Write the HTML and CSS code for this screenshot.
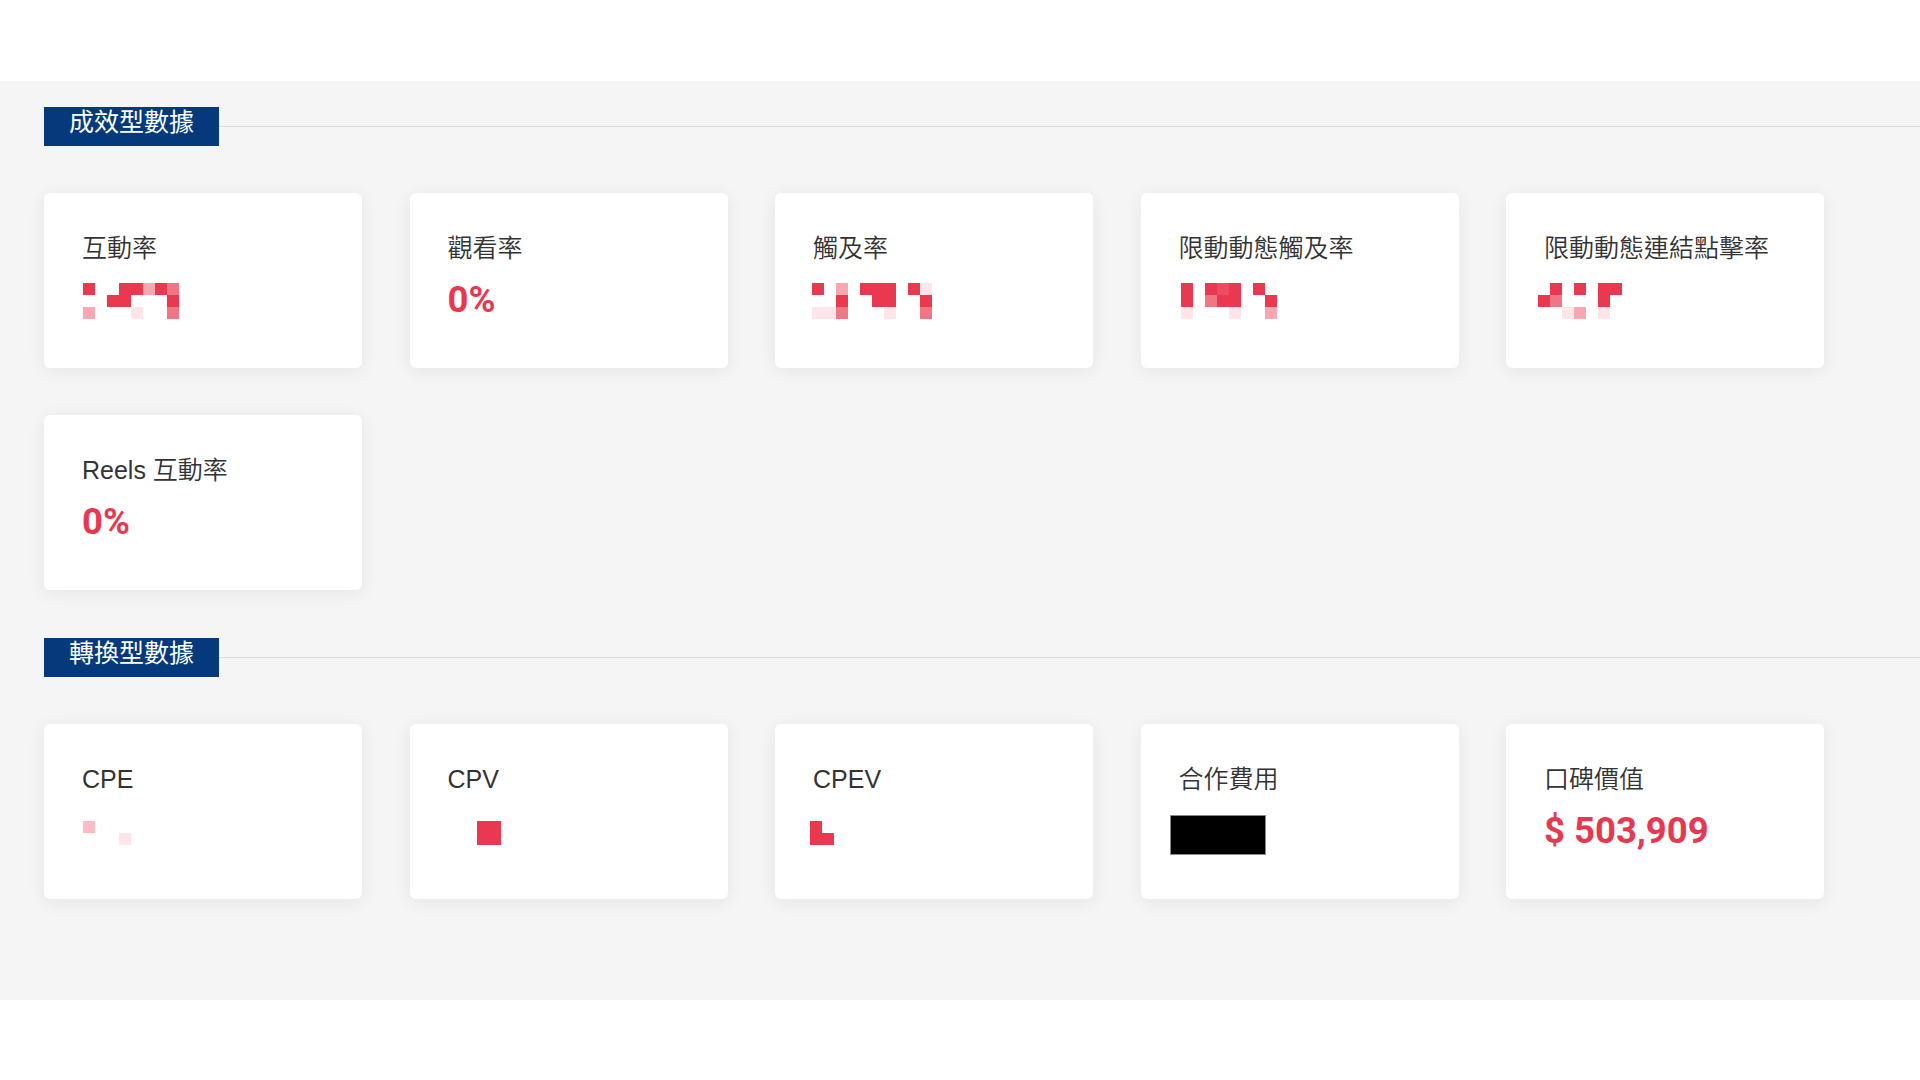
FILE: index.html
```html
<!DOCTYPE html>
<html lang="zh-Hant">
<head>
<meta charset="utf-8">
<title>數據</title>
<link rel="stylesheet" href="styles.css">
</head>
<body>
<main class="panel">
  <section class="group">
    <div class="group-head"><h2 class="group-title">成效型數據</h2><span class="group-line"></span></div>
    <div class="cards">
      <div class="card">
        <div class="card-title">互動率</div>
        <div class="value">
          <div class="mosaic m1">
            <div class="mrow"><i class="r"></i><i></i><i></i><i class="r"></i><i class="r"></i><i class="l"></i><i class="r"></i><i class="m"></i></div>
            <div class="mrow"><i></i><i></i><i class="r"></i><i class="r"></i><i></i><i></i><i></i><i class="r"></i></div>
            <div class="mrow"><i class="l"></i><i></i><i></i><i></i><i class="v"></i><i></i><i></i><i class="m"></i></div>
          </div>
        </div>
      </div>
      <div class="card">
        <div class="card-title">觀看率</div>
        <div class="value num">0%</div>
      </div>
      <div class="card">
        <div class="card-title">觸及率</div>
        <div class="value">
          <div class="mosaic m3">
            <div class="mrow"><i class="r"></i><i></i><i class="l"></i><i></i><i class="r"></i><i class="r"></i><i class="r"></i><i></i><i class="r"></i><i class="v"></i></div>
            <div class="mrow"><i></i><i></i><i class="r"></i><i></i><i></i><i class="r"></i><i class="r"></i><i></i><i></i><i class="r"></i></div>
            <div class="mrow"><i class="v"></i><i class="v"></i><i class="m"></i><i></i><i></i><i></i><i class="v"></i><i></i><i></i><i class="m"></i></div>
          </div>
        </div>
      </div>
      <div class="card">
        <div class="card-title">限動動態觸及率</div>
        <div class="value">
          <div class="mosaic m4">
            <div class="mrow"><i class="r"></i><i></i><i class="r"></i><i class="r2"></i><i class="r"></i><i></i><i class="r"></i><i></i></div>
            <div class="mrow"><i class="r"></i><i></i><i class="m"></i><i class="r"></i><i class="r"></i><i></i><i></i><i class="r"></i></div>
            <div class="mrow"><i class="v"></i><i></i><i></i><i></i><i class="v"></i><i></i><i></i><i class="l"></i></div>
          </div>
        </div>
      </div>
      <div class="card">
        <div class="card-title">限動動態連結點擊率</div>
        <div class="value">
          <div class="mosaic m5">
            <div class="mrow"><i></i><i class="r"></i><i></i><i class="r"></i><i></i><i class="r"></i><i class="r"></i></div>
            <div class="mrow"><i class="r"></i><i class="m"></i><i></i><i></i><i></i><i class="r"></i><i></i></div>
            <div class="mrow"><i></i><i></i><i class="v"></i><i class="l"></i><i></i><i class="v"></i><i></i></div>
          </div>
        </div>
      </div>
      <div class="card">
        <div class="card-title">Reels 互動率</div>
        <div class="value num">0%</div>
      </div>
    </div>
  </section>

  <section class="group">
    <div class="group-head"><h2 class="group-title">轉換型數據</h2><span class="group-line"></span></div>
    <div class="cards">
      <div class="card">
        <div class="card-title">CPE</div>
        <div class="value">
          <div class="mosaic low mcpe">
            <div class="mrow"><i class="l2"></i><i></i><i></i><i></i></div>
            <div class="mrow"><i></i><i></i><i></i><i class="v"></i></div>
          </div>
        </div>
      </div>
      <div class="card">
        <div class="card-title">CPV</div>
        <div class="value">
          <div class="mosaic low mcpv"><span class="block"></span></div>
        </div>
      </div>
      <div class="card">
        <div class="card-title">CPEV</div>
        <div class="value">
          <div class="mosaic low mcpev">
            <div class="mrow"><i class="r"></i><i></i></div>
            <div class="mrow"><i class="r"></i><i class="r"></i></div>
          </div>
        </div>
      </div>
      <div class="card">
        <div class="card-title">合作費用</div>
        <div class="value">
          <span class="redact"></span>
        </div>
      </div>
      <div class="card">
        <div class="card-title">口碑價值</div>
        <div class="value num">$ 503,909</div>
      </div>
    </div>
  </section>
</main>
</body>
</html>
```

FILE: styles.css
```css
* { box-sizing: border-box; }

html, body {
  margin: 0;
  padding: 0;
  background: #ffffff;
}

body {
  font-family: "Liberation Sans", "Noto Sans CJK TC", sans-serif;
  color: #333333;
  width: 1920px;
  height: 1080px;
  overflow: hidden;
}

.panel {
  margin-top: 81px;
  background: #f5f5f5;
  padding: 26px 0 101px 44px;
  display: flex;
  flex-direction: column;
  gap: 48px;
}

.group-head {
  display: flex;
  align-items: center;
  height: 39px;
}

.group-title {
  margin: 0;
  width: 175px;
  height: 39px;
  background: #043a7b;
  color: #ffffff;
  font-family: "Noto Sans CJK TC", sans-serif;
  font-size: 25px;
  font-weight: 400;
  line-height: 27px;
  text-align: center;
  flex: none;
}

.group-line {
  flex: 1;
  height: 1px;
  background: #dcdcdc;
}

.cards {
  margin-top: 47px;
  display: grid;
  grid-template-columns: repeat(5, 318px);
  column-gap: 47.5px;
  row-gap: 47px;
}

.card {
  height: 175px;
  background: #ffffff;
  border-radius: 6px;
  box-shadow: 0 3px 18px rgba(0, 0, 0, 0.07);
  padding: 38px 38px 0 38px;
}

.card-title {
  font-size: 25px;
  font-weight: 350;
  line-height: 34px;
  color: #333333;
  white-space: nowrap;
}

.value {
  display: flow-root;
  margin-top: 13px;
  height: 44px;
}

.num {
  font-family: Roboto, "Liberation Sans", sans-serif;
  font-weight: 700;
  font-size: 36.5px;
  line-height: 44px;
  color: #e8384f;
}

.mosaic {
  margin-top: 5px;
  display: flex;
  flex-direction: column;
}

.mosaic.low { margin-top: 12px; }

.mrow { display: flex; }

.mrow i {
  display: block;
  width: 12px;
  height: 12px;
}

.mrow i.r { background: #e9384f; }
.mrow i.r2 { background: #ec4c62; }
.mrow i.m { background: #f07686; }
.mrow i.l { background: #f8a7b2; }
.mrow i.l2 { background: #fdbcc4; }
.mrow i.v { background: #fde5e9; }

.m1 { margin-left: 1px; }
.m3 { margin-left: -1px; }
.m4 { margin-left: 2px; }
.m5 { margin-left: -6px; }
.mcpe { margin-left: 1px; }
.mcpv { margin-left: 29px; }
.mcpev { margin-left: -3px; }

.block {
  display: block;
  width: 24px;
  height: 24px;
  background: #e9384f;
}

.redact {
  display: block;
  margin: 6px 0 0 -9px;
  width: 96px;
  height: 40px;
  background: #000000;
  border: 1px solid #8a8a8a;
}
```
